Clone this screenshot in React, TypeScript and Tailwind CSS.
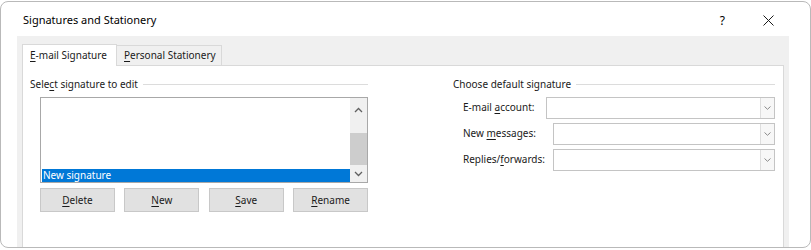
import React from 'react'

const font = { fontFamily: '"Noto Sans", "Open Sans", sans-serif' }

function U({ children }: { children: React.ReactNode }) {
  return <span className="underline underline-offset-[2px] decoration-[1px]">{children}</span>
}

function Chevron({ up = false }: { up?: boolean }) {
  return (
    <svg width="9" height="6" viewBox="0 0 9 6" className="block">
      <path
        d={up ? 'M1 5 L4.5 1.5 L8 5' : 'M1 1 L4.5 4.5 L8 1'}
        fill="none"
        stroke="#606060"
        strokeWidth="1.3"
      />
    </svg>
  )
}

function GroupTitle({ children }: { children: React.ReactNode }) {
  return (
    <div className="flex items-center h-[14px]">
      <span className="pr-[5px] whitespace-nowrap">{children}</span>
      <div className="flex-1 h-px bg-[#dcdcdc]" />
    </div>
  )
}

function Combo({ width }: { width: string }) {
  return (
    <div className={`${width} h-[22px] border border-[#c4c4c4] bg-white flex justify-end`}>
      <div className="w-[14px] h-full border-l border-[#dedede] bg-[#f7f7f7] flex items-center justify-center">
        <svg width="7" height="4" viewBox="0 0 7 4" className="block">
          <path d="M0.5 0.5 L3.5 3.3 L6.5 0.5" fill="none" stroke="#8a8a8a" strokeWidth="1" />
        </svg>
      </div>
    </div>
  )
}

function Btn({ children }: { children: React.ReactNode }) {
  return (
    <div className="w-[75px] h-[24px] bg-[#e1e1e1] border border-[#c8c8c8] flex items-center justify-center text-[#1a1a1a]">
      {children}
    </div>
  )
}

export default function App() {
  return (
    <div className="w-[811px] h-[250px] bg-white pt-px" style={font}>
      <div className="w-[811px] h-[247px] border border-[#b9b9b9] rounded-[8px] overflow-hidden bg-white flex flex-col text-[10px] text-[#1a1a1a]">
        {/* Title bar */}
        <div className="h-[34px] shrink-0 flex items-center pt-[3px] pl-[22px] pr-[36px]">
          <span className="text-[11px] text-black">Signatures and Stationery</span>
          <span className="ml-auto text-[12px] text-black">?</span>
          <svg width="11" height="11" viewBox="0 0 11 11" className="ml-[38px]">
            <path d="M0.5 0.5 L10.5 10.5 M10.5 0.5 L0.5 10.5" stroke="#1a1a1a" strokeWidth="1" />
          </svg>
        </div>

        {/* Dialog body */}
        <div className="flex-1 ml-[16px] mr-[21px] bg-[#f0f0f0] pt-[8px] px-[5px] flex flex-col">
          {/* Tabs */}
          <div className="flex items-end h-[21px] relative z-10">
            <div className="h-[22px] w-[95px] bg-white border border-b-0 border-[#d9d9d9] flex items-center pl-[7px] -mb-px">
              <span><U>E</U>-mail Signature</span>
            </div>
            <div className="h-[20px] w-[105px] bg-[#f0f0f0] border border-l-0 border-b-0 border-[#d9d9d9] flex items-center pl-[7px]">
              <span><U>P</U>ersonal Stationery</span>
            </div>
          </div>

          {/* Panel */}
          <div className="flex-1 bg-white border border-[#d9d9d9] border-b-0 pt-[11px] pl-[7px] flex">
            {/* Left group */}
            <div className="w-[338px]">
              <GroupTitle>
                Sele<U>c</U>t signature to edit
              </GroupTitle>
              <div className="ml-[10px] mt-[6px] h-[86px] border border-[#a8a8a8] flex">
                <div className="flex-1 flex flex-col justify-end pl-px">
                  <div className="h-[13px] bg-[#0078d7] text-white leading-[13px] pl-[1px]">New signature</div>
                </div>
                <div className="w-[17px] bg-[#f0f0f0] flex flex-col">
                  <div className="h-[21px] flex items-center justify-center pt-[2px]">
                    <Chevron up />
                  </div>
                  <div className="h-[14px]" />
                  <div className="h-[32px] bg-[#cdcdcd]" />
                  <div className="flex-1 flex items-center justify-center">
                    <Chevron />
                  </div>
                </div>
              </div>
              <div className="ml-[10px] mt-[5px] flex gap-[9.5px]">
                <Btn>
                  <U>D</U>elete
                </Btn>
                <Btn>
                  <U>N</U>ew
                </Btn>
                <Btn>
                  <U>S</U>ave
                </Btn>
                <Btn>
                  <U>R</U>ename
                </Btn>
              </div>
            </div>

            {/* Right group */}
            <div className="ml-[85px] w-[322px]">
              <GroupTitle>Choose default signature</GroupTitle>
              <div className="mt-[6px] flex flex-col gap-[4px]">
                <div className="flex">
                  <span className="ml-[10px] w-[83px] pt-[3px]">
                    E-mail <U>a</U>ccount:
                  </span>
                  <Combo width="w-[229px]" />
                </div>
                <div className="flex">
                  <span className="ml-[10px] w-[90px] pt-[3px]">
                    New <U>m</U>essages:
                  </span>
                  <Combo width="w-[222px]" />
                </div>
                <div className="flex">
                  <span className="ml-[10px] w-[90px] pt-[3px]">
                    Replies/<U>f</U>orwards:
                  </span>
                  <Combo width="w-[222px]" />
                </div>
              </div>
            </div>
          </div>
        </div>
      </div>
    </div>
  )
}
